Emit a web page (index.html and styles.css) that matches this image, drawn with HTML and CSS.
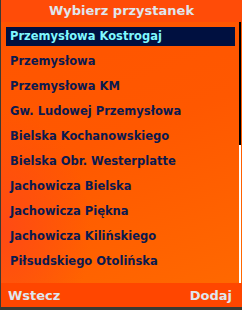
FILE: index.html
```html
<!DOCTYPE html>
<html lang="pl">
<head>
    <meta charset="UTF-8">
    <title>Wybierz przystanek</title>
    <link rel="stylesheet" href="styles.css">
</head>
<body>
    <div class="screen">
        <div class="title">Wybierz przystanek</div>

        <div class="middle">
            <ul class="stops">
                <li class="selected"><span>Przemysłowa Kostrogaj</span></li>
                <li><span>Przemysłowa</span></li>
                <li><span>Przemysłowa KM</span></li>
                <li><span>Gw. Ludowej Przemysłowa</span></li>
                <li><span>Bielska Kochanowskiego</span></li>
                <li><span>Bielska Obr. Westerplatte</span></li>
                <li><span>Jachowicza Bielska</span></li>
                <li><span>Jachowicza Piękna</span></li>
                <li><span>Jachowicza Kilińskiego</span></li>
                <li><span>Piłsudskiego Otolińska</span></li>
            </ul>
            <!-- scroll position -->
            <div class="scrollbar">
                <div class="thumb"></div>
            </div>
        </div>

        <div class="softkeys">
            <span>Wstecz</span>
            <span>Dodaj</span>
        </div>
    </div>
</body>
</html>
```

FILE: styles.css
```css
body {
    margin: 0;
    background: #3b3a33;
    font-family: "DejaVu Sans", Verdana, sans-serif;
}

.screen {
    width: 241px;
    height: 307px;
    margin-left: 1px;
    display: flex;
    flex-direction: column;
    background-color: #ff5800;
    background-image:
        radial-gradient(ellipse 90px 120px at 0px 230px, #ff4a14 0%, rgba(255, 74, 20, 0) 100%),
        linear-gradient(160deg, #ff5400 0%, #ff5800 45%, #ff6a00 100%);
    overflow: hidden;
}

.title {
    height: 22px;
    line-height: 21px;
    text-align: center;
    font-weight: bold;
    font-size: 13px;
    color: #dfe6ee;
    background: #ff4c08;
}

.middle {
    flex: 1;
    display: flex;
    min-height: 0;
}

.stops {
    flex: 1;
    list-style: none;
    margin: 0;
    padding: 2px 0 0 0;
    overflow: hidden;
}

.stops li {
    height: 25px;
    padding: 3px 4px 0 5px;
    box-sizing: border-box;
}

.stops span {
    display: block;
    height: 19px;
    line-height: 19px;
    padding-left: 4px;
    font-size: 11.5px;
    font-weight: bold;
    color: #0b1a4f;
    white-space: nowrap;
}

.stops .selected span {
    background: #001040;
    color: #7ff8ff;
}

.scrollbar {
    width: 2px;
    margin-right: 1px;
    background: #ffffff;
}

.thumb {
    height: 123px;
    background: #000000;
}

.softkeys {
    height: 24px;
    display: flex;
    justify-content: space-between;
    align-items: center;
    padding: 0 10px 0 7px;
    background: #ff4600;
    color: #dfe6ee;
    font-size: 13px;
    font-weight: bold;
}
```
